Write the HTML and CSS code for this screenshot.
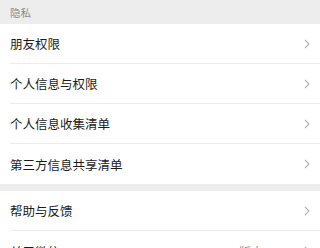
FILE: index.html
```html
<!DOCTYPE html>
<html lang="zh">
<head>
<meta charset="utf-8">
<link rel="stylesheet" href="styles.css">
</head>
<body>
<div class="page">
  <div class="section-title">隐私</div>
  <div class="group">
    <div class="row"><div class="row-inner"><span class="label">朋友权限</span><svg class="chev" viewBox="0 0 6 10" width="6" height="10"><polyline points="1,1 5,5 1,9"/></svg></div></div>
    <div class="row"><div class="row-inner"><span class="label">个人信息与权限</span><svg class="chev" viewBox="0 0 6 10" width="6" height="10"><polyline points="1,1 5,5 1,9"/></svg></div></div>
    <div class="row"><div class="row-inner"><span class="label">个人信息收集清单</span><svg class="chev" viewBox="0 0 6 10" width="6" height="10"><polyline points="1,1 5,5 1,9"/></svg></div></div>
    <div class="row"><div class="row-inner last"><span class="label">第三方信息共享清单</span><svg class="chev" viewBox="0 0 6 10" width="6" height="10"><polyline points="1,1 5,5 1,9"/></svg></div></div>
  </div>
  <div class="group gap">
    <div class="row"><div class="row-inner"><span class="label">帮助与反馈</span><svg class="chev" viewBox="0 0 6 10" width="6" height="10"><polyline points="1,1 5,5 1,9"/></svg></div></div>
    <div class="row"><div class="row-inner last"><span class="label">关于微信</span><span class="value">版本 8.0.49</span><svg class="chev" viewBox="0 0 6 10" width="6" height="10"><polyline points="1,1 5,5 1,9"/></svg></div></div>
  </div>
</div>
</body>
</html>
```

FILE: styles.css
```css
html, body {
  margin: 0;
  padding: 0;
  background: #ededed;
}
body {
  font-family: "Noto Sans CJK SC", "Noto Sans", sans-serif;
  -webkit-font-smoothing: antialiased;
}
.page {
  width: 100%;
}
.section-title {
  height: 24px;
  box-sizing: border-box;
  padding: 0 10px;
  display: flex;
  align-items: center;
  font-size: 10.5px;
  color: #8a8a8a;
}
.group {
  background: #ffffff;
}
.gap {
  margin-top: 7px;
}
.row {
  padding-left: 10px;
}
.row-inner {
  height: 40px;
  box-sizing: border-box;
  border-bottom: 1px solid #ececec;
  display: flex;
  align-items: center;
  padding-right: 10px;
}
.row-inner.last {
  border-bottom: none;
}
.label {
  flex: 1;
  font-size: 12.5px;
  color: #1a1a1a;
}
.value {
  font-size: 12px;
  color: #8a8a8a;
  margin-right: 5px;
}
.chev {
  display: block;
  fill: none;
  stroke: #b4b4b4;
  stroke-width: 1.1;
}
```
